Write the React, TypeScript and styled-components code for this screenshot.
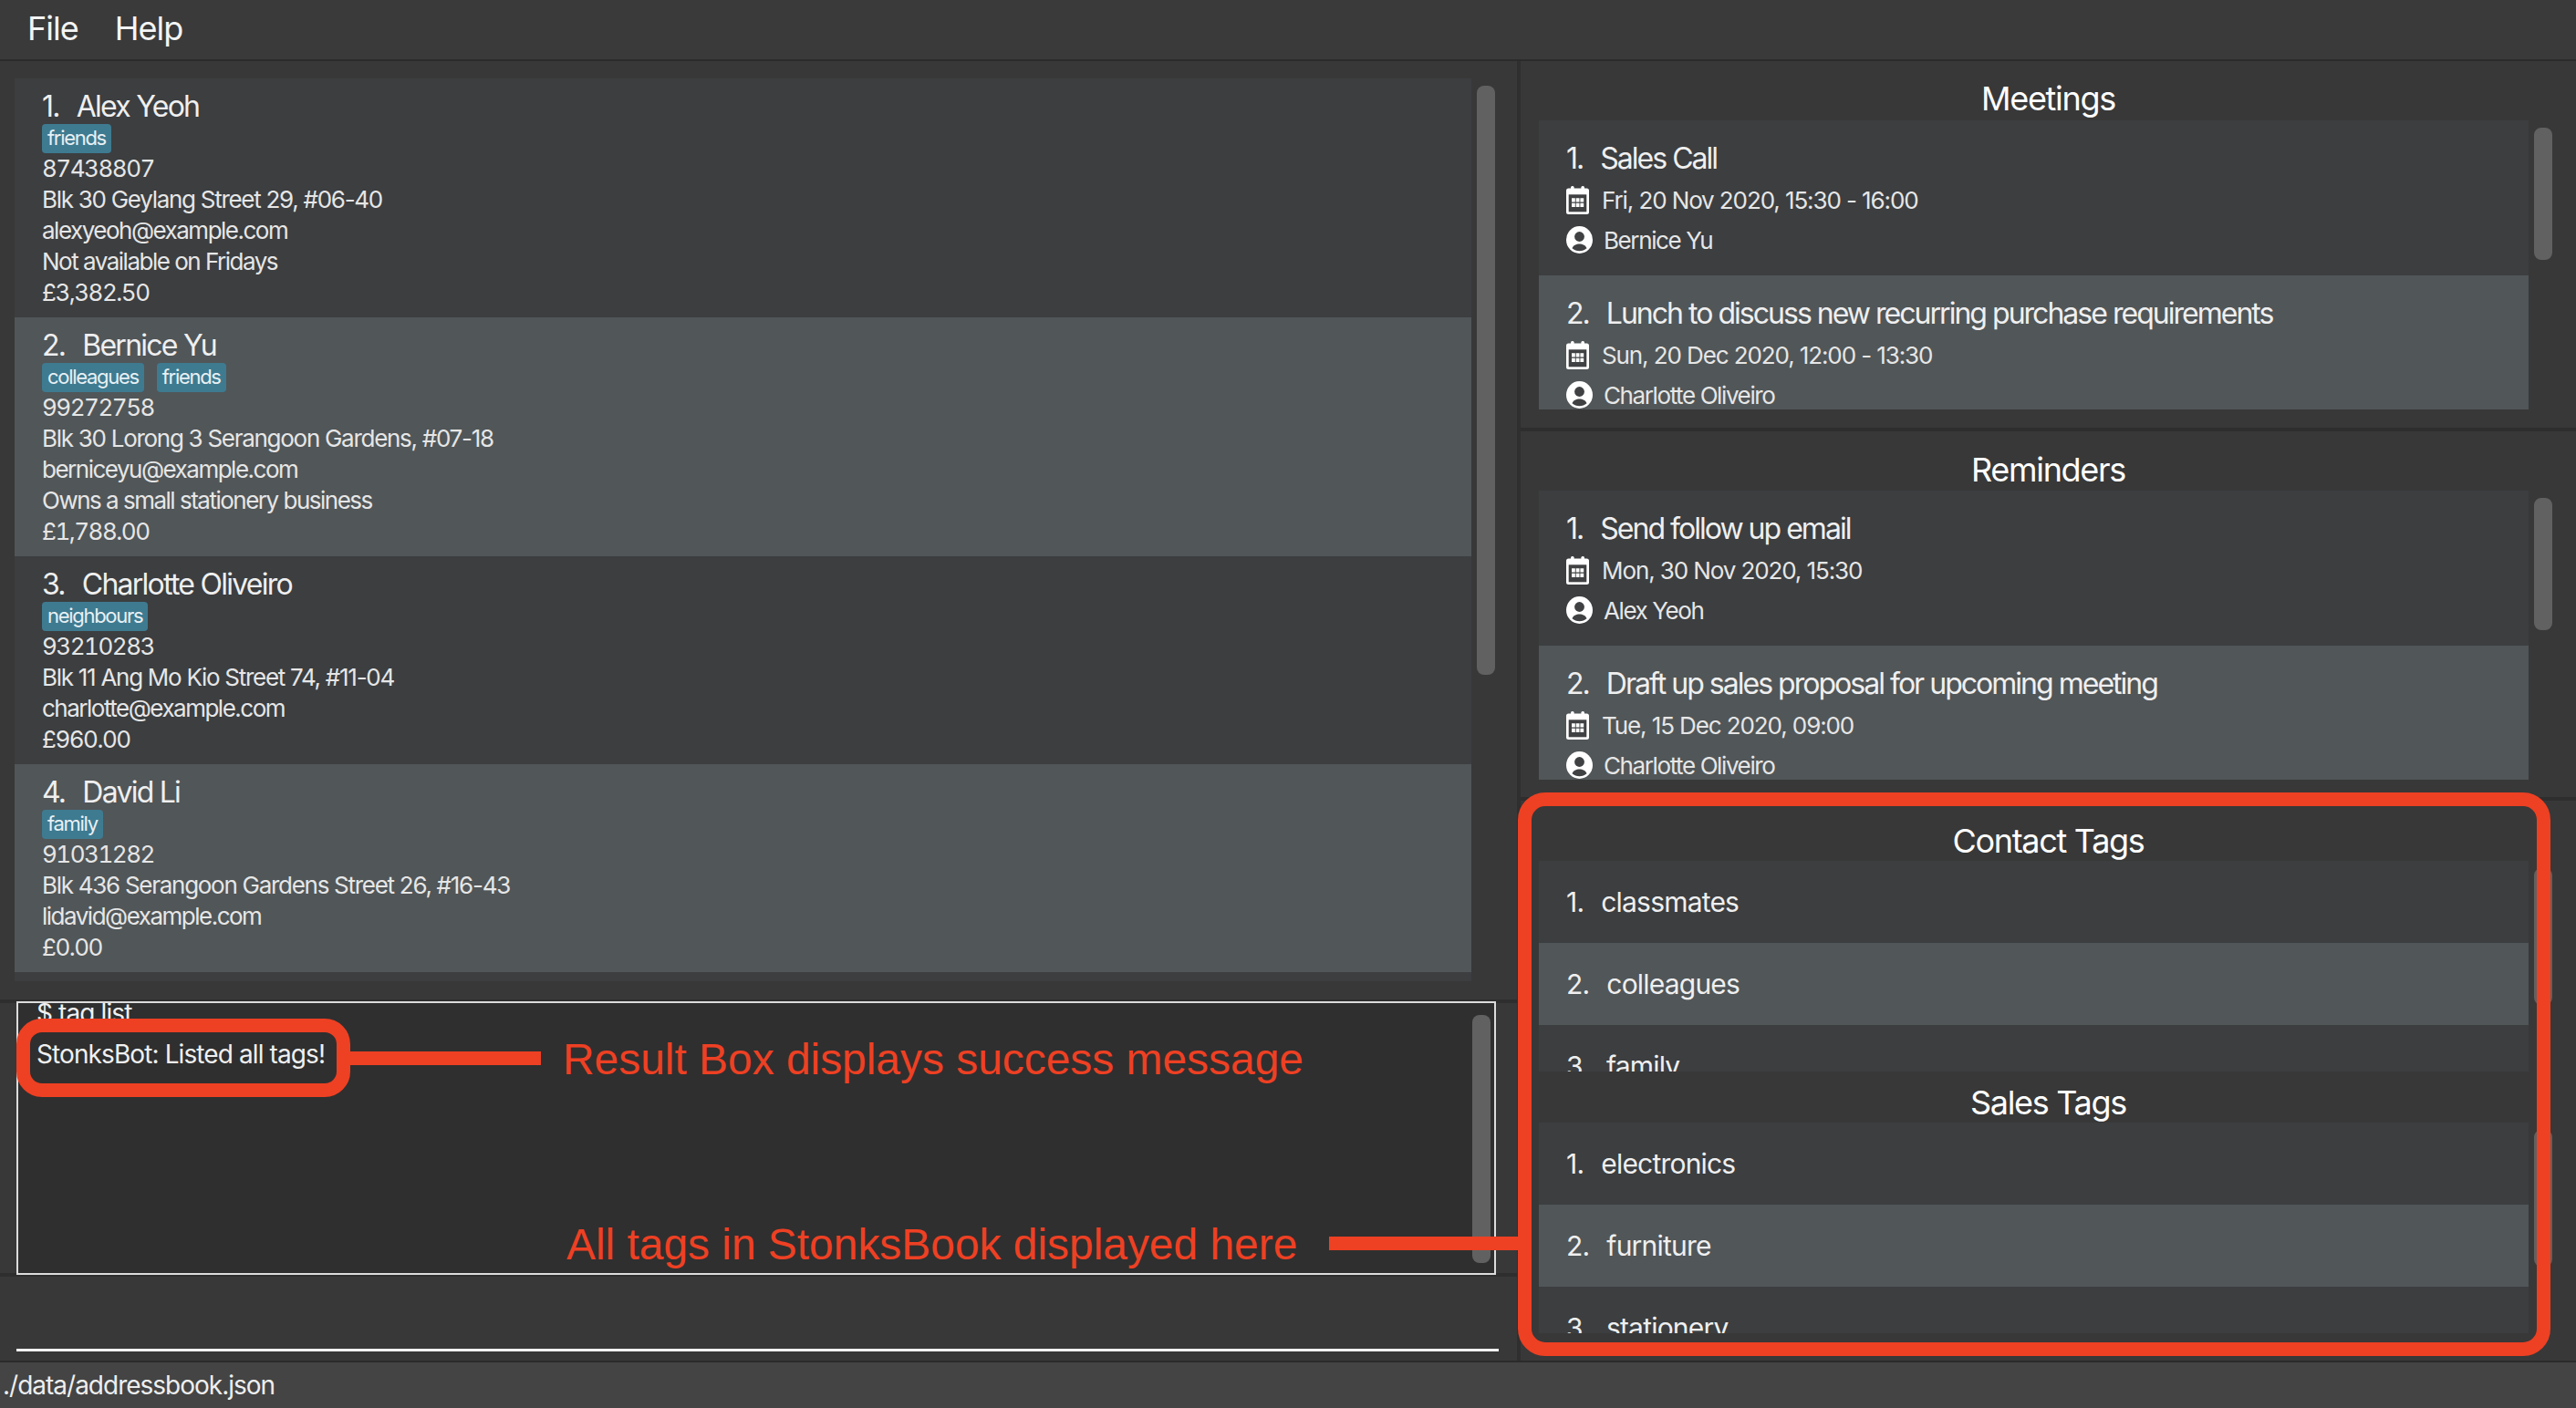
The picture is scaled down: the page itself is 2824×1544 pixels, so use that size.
import React from "react";
import styled, { createGlobalStyle } from "styled-components";

const FONT = `Inter, "Liberation Sans", sans-serif`;

const GlobalStyle = createGlobalStyle`
  html, body {
    margin: 0;
    padding: 0;
    background: #383838;
  }
  * {
    box-sizing: border-box;
  }
`;

const Root = styled.div`
  position: relative;
  width: 2824px;
  height: 1544px;
  overflow: hidden;
  display: flex;
  flex-direction: column;
  background: #383838;
  color: #f0f0f0;
  font-family: ${FONT};
`;

const MenuBar = styled.div`
  height: 67px;
  flex: none;
  display: flex;
  align-items: center;
  gap: 40px;
  padding: 0 0 4px 30px;
  background: #3a3a3a;
  border-bottom: 2px solid #2b2b2b;
`;

const MenuItem = styled.span`
  font-size: 36px;
  letter-spacing: -1px;
  color: #f4f4f4;
`;

const Body = styled.div`
  flex: 1;
  min-height: 0;
  display: flex;
`;

const LeftColumn = styled.div`
  width: 1667px;
  flex: none;
  display: flex;
  flex-direction: column;
  border-right: 4px solid #2f2f2f;
`;

const PersonArea = styled.div`
  height: 1029px;
  flex: none;
  display: flex;
  padding: 19px 0 0 16px;
`;

const PersonList = styled.div`
  width: 1597px;
  height: 990px;
  flex: none;
  overflow: hidden;
  background: #3c3e40;
`;

const PersonRow = styled.div<{ $alt?: boolean }>`
  padding: 10px 30px;
  background: ${(p) => (p.$alt ? "#515658" : "#3c3e40")};
`;

const Index = styled.span<{ $gap: number }>`
  margin-right: ${(p) => p.$gap}px;
`;

const RowName = styled.div`
  height: 40px;
  line-height: 42px;
  font-size: 32px;
  letter-spacing: -1.75px;
  white-space: pre;
  color: #efefef;
`;

const TagRow = styled.div`
  height: 32px;
  display: flex;
  gap: 14px;
`;

const Tag = styled.span`
  height: 32px;
  line-height: 31px;
  padding: 0 6px;
  border-radius: 4px;
  background: #3e7b91;
  font-size: 22px;
  letter-spacing: -1.3px;
  color: #e8f0f4;
`;

const RowText = styled.div`
  height: 34px;
  line-height: 34px;
  font-size: 26px;
  letter-spacing: -1.5px;
  color: #e6e6e6;
`;

const AddressText = styled(RowText)`
  letter-spacing: -1.28px;
`;

const FigureText = styled(RowText)`
  font-feature-settings: "tnum";
`;

const Scroll = styled.div<{ $top: number; $left?: number; $right?: number }>`
  width: 20px;
  flex: none;
  margin-left: ${(p) => p.$left ?? 6}px;
  margin-right: ${(p) => p.$right ?? 0}px;
  margin-top: ${(p) => p.$top}px;
`;

const Thumb = styled.div<{ $height: number }>`
  width: 100%;
  height: ${(p) => p.$height}px;
  border-radius: 8px;
  background: #616161;
`;

const ResultSection = styled.div`
  height: 304px;
  flex: none;
  padding: 0 23px 0 18px;
  border-top: 4px solid #2e2e2e;
  border-bottom: 4px solid #2e2e2e;
`;

const ResultBox = styled.div`
  height: 300px;
  margin-top: -2px;
  display: flex;
  overflow: hidden;
  border: 2px solid #dcdcdc;
  background: #2f2f2f;
`;

const ResultText = styled.div`
  flex: 1;
  min-width: 0;
  padding-left: 20px;
  font-size: 28px;
  letter-spacing: -0.9px;
  color: #f0f0f0;
`;

const ResultLine = styled.div<{ $top: number }>`
  height: 34px;
  line-height: 34px;
  margin-top: ${(p) => p.$top}px;
`;

const CommandArea = styled.div`
  flex: 1;
  padding: 0 20px 0 18px;
`;

const CommandLine = styled.div`
  height: 82px;
  border-bottom: 3px solid #f2f2f2;
`;

const RightColumn = styled.div`
  flex: 1;
  min-width: 0;
  display: flex;
  flex-direction: column;
`;

const Panel = styled.section<{ $height: number; $bare?: boolean }>`
  height: ${(p) => p.$height}px;
  flex: none;
  padding-left: 20px;
  border-bottom: ${(p) => (p.$bare ? "none" : "4px solid #2e2e2e")};
`;

const PanelTitle = styled.h2<{ $height: number; $lift?: number }>`
  height: ${(p) => p.$height}px;
  margin: 0;
  padding: 0 20px ${(p) => p.$lift ?? 0}px 0;
  display: flex;
  align-items: flex-end;
  justify-content: center;
  line-height: 44px;
  font-size: 36px;
  font-weight: 400;
  letter-spacing: -1.3px;
  color: #fff;
`;

const PanelBody = styled.div`
  display: flex;
`;

const CardList = styled.div<{ $height: number }>`
  width: 1085px;
  height: ${(p) => p.$height}px;
  flex: none;
  overflow: hidden;
  background: #3c3e40;
`;

const EventCard = styled.div<{ $alt?: boolean }>`
  height: ${(p) => (p.$alt ? 168 : 170)}px;
  padding: 20px 30px 0;
  background: ${(p) => (p.$alt ? "#515658" : "#3c3e40")};
`;

const EventTitle = styled.div`
  height: 45px;
  line-height: 44px;
  font-size: 32px;
  letter-spacing: -1.98px;
  white-space: pre;
  color: #efefef;
`;

const EventMeta = styled.div`
  height: 44px;
  display: flex;
  align-items: center;
  font-size: 26px;
  color: #e6e6e6;
`;

const EventDate = styled(EventMeta)`
  gap: 14px;
  letter-spacing: -1.1px;
`;

const EventPerson = styled(EventMeta)`
  gap: 12px;
  letter-spacing: -1.4px;
`;

const TagItem = styled.div<{ $alt?: boolean }>`
  height: 90px;
  flex: none;
  display: flex;
  align-items: center;
  padding: 0 30px;
  font-size: 30px;
  letter-spacing: -0.8px;
  white-space: pre;
  color: #efefef;
  background: ${(p) => (p.$alt ? "#515658" : "#3c3e40")};
`;

const StatusBar = styled.div`
  height: 52px;
  flex: none;
  display: flex;
  align-items: center;
  padding-left: 3px;
  background: #444;
  border-top: 2px solid #2b2b2b;
  font-size: 28px;
  letter-spacing: -1px;
  color: #eee;
`;

/* annotations drawn on top of the screenshot */
const Ring = styled.div<{ $x: number; $y: number; $w: number; $h: number; $r: number }>`
  position: absolute;
  left: ${(p) => p.$x}px;
  top: ${(p) => p.$y}px;
  width: ${(p) => p.$w}px;
  height: ${(p) => p.$h}px;
  border: 15px solid #ee4023;
  border-radius: ${(p) => p.$r}px;
`;

const Connector = styled.div<{ $x: number; $y: number; $w: number }>`
  position: absolute;
  left: ${(p) => p.$x}px;
  top: ${(p) => p.$y}px;
  width: ${(p) => p.$w}px;
  height: 15px;
  background: #ee4023;
`;

const Note = styled.div<{ $x: number; $y: number }>`
  position: absolute;
  left: ${(p) => p.$x}px;
  top: ${(p) => p.$y}px;
  line-height: 60px;
  font-family: "Liberation Sans", Arial, sans-serif;
  font-size: 48px;
  letter-spacing: -0.05px;
  white-space: nowrap;
  color: #ee4023;
`;

const CalendarIcon = () => (
  <svg width="25" height="31" viewBox="0 0 25 31">
    <rect x="5" y="0" width="3.6" height="6" rx="1.5" fill="#fff" />
    <rect x="16.4" y="0" width="3.6" height="6" rx="1.5" fill="#fff" />
    <rect x="0" y="2.5" width="25" height="28.5" rx="2.5" fill="#fff" />
    <rect x="2.7" y="9.3" width="19.6" height="19" fill="#3f4143" />
    <path
      d="M6 13.3h3.8v4.2H6zM10.7 13.3h3.8v4.2h-3.8zM15.4 13.3h3.8v4.2h-3.8zM6 18.7h3.8v4.2H6zM10.7 18.7h3.8v4.2h-3.8zM15.4 18.7h3.8v4.2h-3.8z"
      fill="#fff"
    />
  </svg>
);

const PersonIcon = () => (
  <svg width="29" height="30" viewBox="0 0 29 30">
    <ellipse cx="14.5" cy="15" rx="14.5" ry="15" fill="#fff" />
    <circle cx="14.5" cy="11.5" r="5.4" fill="#3f4143" />
    <path d="M6.5 24.3c1-3.3 4.5-4.8 8-4.8s7 1.5 8 4.8c-2.2 2-4.8 3-8 3s-5.800-1-8-3z" fill="#3f4143" />
  </svg>
);

const people = [
  { no: "1.", name: "Alex Yeoh", tags: ["friends"], phone: "87438807", address: "Blk 30 Geylang Street 29, #06-40", email: "alexyeoh@example.com", remark: "Not available on Fridays", sales: "£3,382.50" },
  { no: "2.", name: "Bernice Yu", tags: ["colleagues", "friends"], phone: "99272758", address: "Blk 30 Lorong 3 Serangoon Gardens, #07-18", email: "berniceyu@example.com", remark: "Owns a small stationery business", sales: "£1,788.00" },
  { no: "3.", name: "Charlotte Oliveiro", tags: ["neighbours"], phone: "93210283", address: "Blk 11 Ang Mo Kio Street 74, #11-04", email: "charlotte@example.com", sales: "£960.00" },
  { no: "4.", name: "David Li", tags: ["family"], phone: "91031282", address: "Blk 436 Serangoon Gardens Street 26, #16-43", email: "lidavid@example.com", sales: "£0.00" },
];

const meetings = [
  { title: "Sales Call", date: "Fri, 20 Nov 2020, 15:30 - 16:00", person: "Bernice Yu" },
  { title: "Lunch to discuss new recurring purchase requirements", date: "Sun, 20 Dec 2020, 12:00 - 13:30", person: "Charlotte Oliveiro" },
];

const reminders = [
  { title: "Send follow up email", date: "Mon, 30 Nov 2020, 15:30", person: "Alex Yeoh" },
  { title: "Draft up sales proposal for upcoming meeting", date: "Tue, 15 Dec 2020, 09:00", person: "Charlotte Oliveiro" },
];

const EventCards: React.FC<{ items: typeof meetings }> = ({ items }) => (
  <>
    {items.map((m, i) => (
      <EventCard key={m.title} $alt={i % 2 === 1}>
        <EventTitle>
          <Index $gap={19}>{i + 1}.</Index>
          {m.title}
        </EventTitle>
        <EventDate>
          <CalendarIcon />
          {m.date}
        </EventDate>
        <EventPerson>
          <PersonIcon />
          {m.person}
        </EventPerson>
      </EventCard>
    ))}
  </>
);

const TagItems: React.FC<{ items: string[] }> = ({ items }) => (
  <>
    {items.map((t, i) => (
      <TagItem key={t} $alt={i % 2 === 1}>
        <Index $gap={19}>{i + 1}.</Index>
        {t}
      </TagItem>
    ))}
  </>
);

export default function App() {
  return (
    <Root>
      <GlobalStyle />
      <MenuBar>
        <MenuItem>File</MenuItem>
        <MenuItem>Help</MenuItem>
      </MenuBar>

      <Body>
        <LeftColumn>
          <PersonArea>
            <PersonList>
              {people.map((p, i) => (
                <PersonRow key={p.name} $alt={i % 2 === 1}>
                  <RowName>
                    <Index $gap={19}>{p.no}</Index>
                    {p.name}
                  </RowName>
                  <TagRow>
                    {p.tags.map((t) => (
                      <Tag key={t}>{t}</Tag>
                    ))}
                  </TagRow>
                  <FigureText>{p.phone}</FigureText>
                  <AddressText>{p.address}</AddressText>
                  <RowText>{p.email}</RowText>
                  {p.remark && <RowText>{p.remark}</RowText>}
                  <FigureText>{p.sales}</FigureText>
                </PersonRow>
              ))}
            </PersonList>
            <Scroll $top={8}>
              <Thumb $height={646} />
            </Scroll>
          </PersonArea>

          <ResultSection>
            <ResultBox>
              <ResultText>
                <ResultLine $top={-6}>$ tag list</ResultLine>
                <ResultLine $top={11}>StonksBot: Listed all tags!</ResultLine>
              </ResultText>
              <Scroll $top={13} $left={0} $right={4}>
                <Thumb $height={272} />
              </Scroll>
            </ResultBox>
          </ResultSection>

          <CommandArea>
            <CommandLine />
          </CommandArea>
        </LeftColumn>

        <RightColumn>
          <Panel $height={406}>
            <PanelTitle $height={65} $lift={2}>Meetings</PanelTitle>
            <PanelBody>
              <CardList $height={317}>
                <EventCards items={meetings} />
              </CardList>
              <Scroll $top={8}>
                <Thumb $height={145} />
              </Scroll>
            </PanelBody>
          </Panel>

          <Panel $height={405}>
            <PanelTitle $height={65} $lift={1}>Reminders</PanelTitle>
            <PanelBody>
              <CardList $height={317}>
                <EventCards items={reminders} />
              </CardList>
              <Scroll $top={8}>
                <Thumb $height={145} />
              </Scroll>
            </PanelBody>
          </Panel>

          <Panel $height={611} $bare>
            <PanelTitle $height={66}>Contact Tags</PanelTitle>
            <PanelBody>
              <CardList $height={231}>
                <TagItems items={["classmates", "colleagues", "family"]} />
              </CardList>
              <Scroll $top={8}>
                <Thumb $height={150} />
              </Scroll>
            </PanelBody>
            <PanelTitle $height={56}>Sales Tags</PanelTitle>
            <PanelBody>
              <CardList $height={231}>
                <TagItems items={["electronics", "furniture", "stationery"]} />
              </CardList>
              <Scroll $top={8}>
                <Thumb $height={150} />
              </Scroll>
            </PanelBody>
          </Panel>
        </RightColumn>
      </Body>

      <StatusBar>./data/addressbook.json</StatusBar>

      <Ring $x={18} $y={1117} $w={366} $h={86} $r={28} />
      <Connector $x={383} $y={1153} $w={210} />
      <Note $x={617} $y={1132}>Result Box displays success message</Note>
      <Note $x={621} $y={1335}>All tags in StonksBook displayed here</Note>
      <Connector $x={1457} $y={1356} $w={207} />
      <Ring $x={1664} $y={869} $w={1132} $h={618} $r={30} />
    </Root>
  );
}
